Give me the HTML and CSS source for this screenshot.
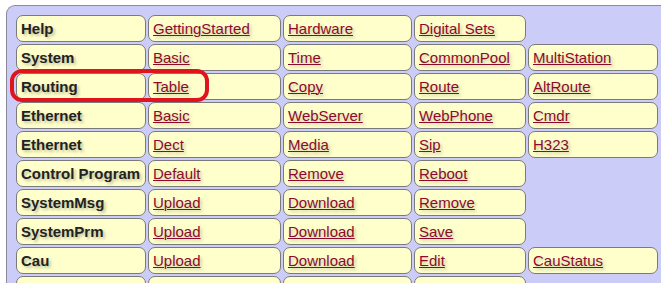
FILE: index.html
```html
<!DOCTYPE html>
<html lang="en">
<head>
  <meta charset="UTF-8">
  <title>Menu</title>
  <link rel="stylesheet" href="styles.css">
</head>
<body>
  <div class="panel">
    <div class="menu">
      <div class="cell label">Help</div>
      <div class="cell"><a href="#">GettingStarted</a></div>
      <div class="cell"><a href="#">Hardware</a></div>
      <div class="cell"><a href="#">Digital Sets</a></div>
      <div class="blank"></div>

      <div class="cell label">System</div>
      <div class="cell"><a href="#">Basic</a></div>
      <div class="cell"><a href="#">Time</a></div>
      <div class="cell"><a href="#">CommonPool</a></div>
      <div class="cell"><a href="#">MultiStation</a></div>

      <div class="cell label">Routing</div>
      <div class="cell"><a href="#">Table</a></div>
      <div class="cell"><a href="#">Copy</a></div>
      <div class="cell"><a href="#">Route</a></div>
      <div class="cell"><a href="#">AltRoute</a></div>

      <div class="cell label">Ethernet</div>
      <div class="cell"><a href="#">Basic</a></div>
      <div class="cell"><a href="#">WebServer</a></div>
      <div class="cell"><a href="#">WebPhone</a></div>
      <div class="cell"><a href="#">Cmdr</a></div>

      <div class="cell label">Ethernet</div>
      <div class="cell"><a href="#">Dect</a></div>
      <div class="cell"><a href="#">Media</a></div>
      <div class="cell"><a href="#">Sip</a></div>
      <div class="cell"><a href="#">H323</a></div>

      <div class="cell label">Control Program</div>
      <div class="cell"><a href="#">Default</a></div>
      <div class="cell"><a href="#">Remove</a></div>
      <div class="cell"><a href="#">Reboot</a></div>
      <div class="blank"></div>

      <div class="cell label">SystemMsg</div>
      <div class="cell"><a href="#">Upload</a></div>
      <div class="cell"><a href="#">Download</a></div>
      <div class="cell"><a href="#">Remove</a></div>
      <div class="blank"></div>

      <div class="cell label">SystemPrm</div>
      <div class="cell"><a href="#">Upload</a></div>
      <div class="cell"><a href="#">Download</a></div>
      <div class="cell"><a href="#">Save</a></div>
      <div class="blank"></div>

      <div class="cell label">Cau</div>
      <div class="cell"><a href="#">Upload</a></div>
      <div class="cell"><a href="#">Download</a></div>
      <div class="cell"><a href="#">Edit</a></div>
      <div class="cell"><a href="#">CauStatus</a></div>

      <div class="cell label">&nbsp;</div>
      <div class="cell">&nbsp;</div>
      <div class="cell">&nbsp;</div>
      <div class="cell">&nbsp;</div>
      <div class="blank"></div>
    </div>
    <div class="mark"></div>
  </div>
</body>
</html>
```

FILE: styles.css
```css
* {
  margin: 0;
  padding: 0;
  box-sizing: border-box;
}

html, body {
  height: 283px;
  overflow: hidden;
}

body {
  font-family: "Liberation Sans", Arial, sans-serif;
  background: #ffffff;
  padding: 5px 0 0 6px;
}

.panel {
  position: relative;
  width: 700px;
  background: #ccccf8;
  border: 1px solid #8a8a9a;
  border-right: none;
  border-radius: 9px 0 0 0;
  padding: 9px 0 0 9px;
}

.menu {
  display: grid;
  grid-template-columns: 130px 133px 129px 112px 130px;
  grid-auto-rows: 27px;
  column-gap: 2px;
  row-gap: 2px;
}

.cell {
  background: #ffffcc;
  border: 1.5px solid #7a7a7a;
  border-radius: 7px;
  padding: 1px 4px 0;
  font-size: 15px;
  line-height: 24px;
  white-space: nowrap;
  overflow: hidden;
}

.label {
  font-weight: bold;
  color: #222222;
  text-shadow: 2px 2px 3px rgba(0, 0, 0, 0.25);
}

.cell a {
  color: #8c0a2c;
  text-decoration: underline;
  text-decoration-thickness: 1px;
  text-shadow: 2px 2px 3px rgba(0, 0, 0, 0.22);
}

.mark {
  position: absolute;
  left: 3px;
  top: 63px;
  width: 199px;
  height: 33px;
  border: 4px solid #e0141c;
  border-radius: 12px;
}
```
